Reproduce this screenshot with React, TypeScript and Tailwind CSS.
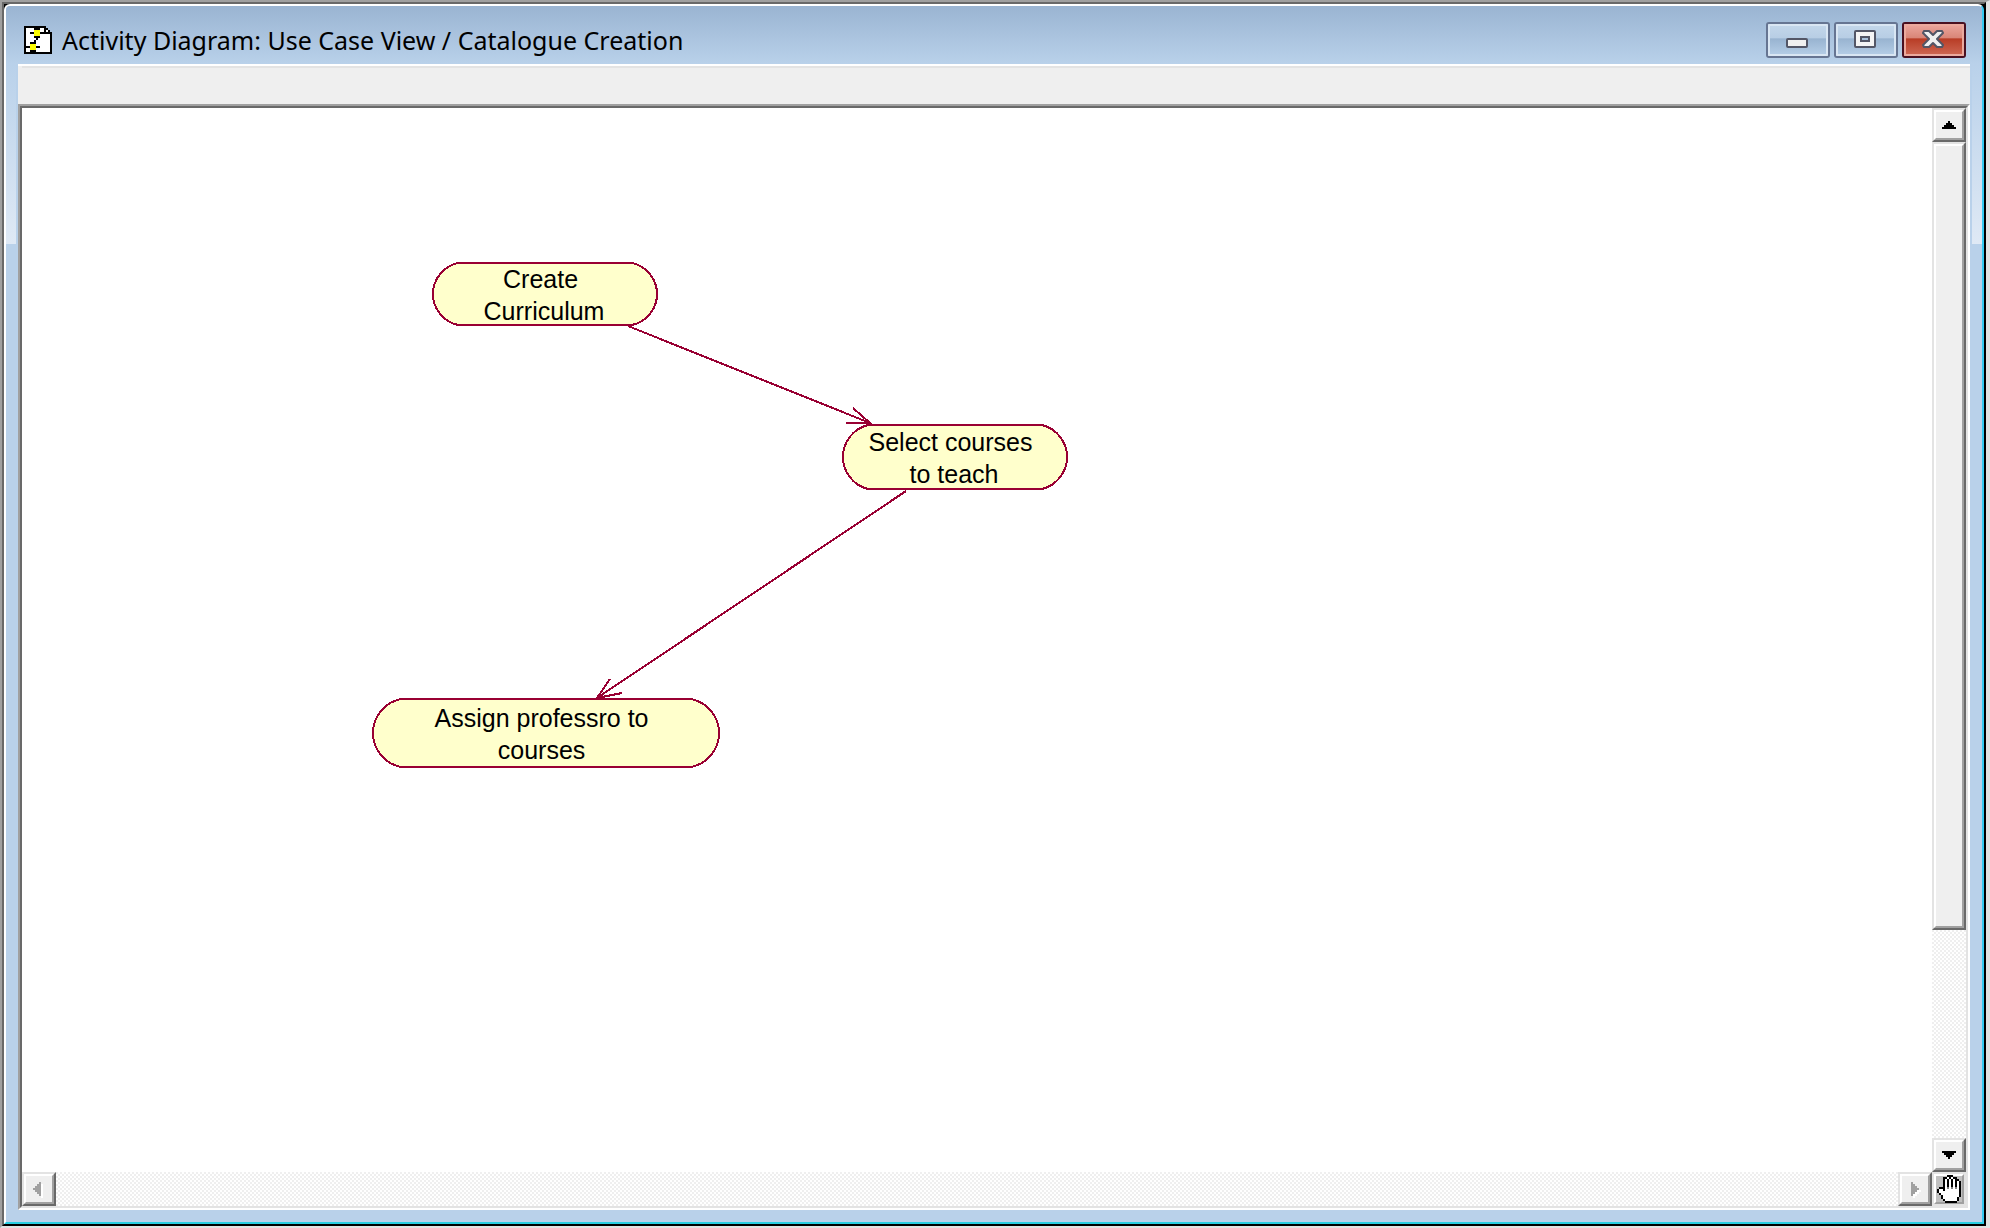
import type { ReactNode } from "react";
import clsx from "clsx";

interface ActivityNode {
  id: string;
  x: number;
  y: number;
  width: number;
  height: number;
  cap: number;
  lines: string[];
}

interface Transition {
  id: string;
  line: string;
  head: string;
}

// Canvas coordinates, origin at the top left of the drawing area
const activities: ActivityNode[] = [
  { id: "create", x: 410, y: 154, width: 226, height: 64, cap: 26, lines: ["Create ", "Curriculum"] },
  { id: "select", x: 820, y: 316, width: 226, height: 66, cap: 26, lines: ["Select courses ", "to teach"] },
  { id: "assign", x: 350, y: 590, width: 348, height: 70, cap: 29, lines: ["Assign professro to ", "courses "] },
];

const transitions: Transition[] = [
  { id: "create-select", line: "M606 218L848 315", head: "M824 315H848L831 300" },
  { id: "select-assign", line: "M884 383L575 590", head: "M588 571L575 590L600 585" },
];

const pageIcon = [
  "BBBBBBBBBBB...",
  "BWWWWBBBWWBB..",
  "BWWWWYYYWWBWB.",
  "BWWBBYYYBBBBBB",
  "BWWWWYYYWWWWWB",
  "BWWWWBBBWWWWWB",
  "BWWWWWBWWWWWWB",
  "BWWWWBWWWWWWWB",
  "BWWBBBWWWWWWWB",
  "BWWYYYWWWWWWWB",
  "BBBYYYBBWWWWWB",
  "BWWYYYWWWWWWWB",
  "BWWBBBWWWWWWWB",
  "BBBBBBBBBBBBBB",
];

const handIcon = [
  ".....BBB....",
  "...BBWBWBB..",
  "...BWBWBWBB.",
  "...BWBWBWBWB",
  "...BWBWBWBWB",
  "...BWBWBWBWB",
  ".BBBWGWGWGWB",
  "BWWBWWWWWWWB",
  "BWWWWWWWWWWB",
  ".BWWWWWWWWWB",
  "..BWWWWWWWWB",
  "..BWWWWWWWB.",
  "...BWWWWWWB.",
  "....BBBBBB..",
];

const palette: Record<string, string> = {
  B: "#000000",
  W: "#ffffff",
  Y: "#ffff00",
  G: "#808080",
};

function PixelIcon({ rows, className }: { rows: string[]; className?: string }) {
  return (
    <svg
      viewBox={`0 0 ${rows[0].length} ${rows.length}`}
      shapeRendering="crispEdges"
      className={className}
      aria-hidden="true"
    >
      {rows.flatMap((row, y) =>
        row.split("").map((c, x) =>
          palette[c] ? <rect key={`${x}-${y}`} x={x} y={y} width="1" height="1" fill={palette[c]} /> : null
        )
      )}
    </svg>
  );
}

// Raised 3D edge shared by the scroll buttons and the thumb
function Raised({ children }: { children?: ReactNode }) {
  return (
    <span className="block h-full w-full border-2 border-t-[#e3e3e3] border-r-[#696969] border-b-[#696969] border-l-[#e3e3e3]">
      <span className="flex h-full w-full items-center justify-center border-2 border-t-white border-r-[#a0a0a0] border-b-[#a0a0a0] border-l-white bg-[#efefef]">
        {children}
      </span>
    </span>
  );
}

const arrows = {
  up: "M6 0h2v2h2v2h2v2h2v2H0V6h2V4h2V2h2z",
  down: "M0 0h14v2h-2v2h-2v2H8v2H6V6H4V4H2V2H0z",
  left: "M6 0h2v14H6v-2H4v-2H2V8H0V6h2V4h2V2h2z",
  right: "M0 0h2v2h2v2h2v2h2v2H6v2H4v2H2v2H0z",
};

function ScrollButton({ dir, disabled = false }: { dir: keyof typeof arrows; disabled?: boolean }) {
  const vertical = dir === "up" || dir === "down";
  return (
    <button type="button" aria-label={`Scroll ${dir}`} disabled={disabled} className="h-[34px] w-[34px] shrink-0">
      <Raised>
        <svg
          width={vertical ? 14 : dir === "left" ? 12 : 8}
          height={vertical ? 8 : 14}
          overflow="visible"
          shapeRendering="crispEdges"
          aria-hidden="true"
        >
          {disabled && <path d={arrows[dir]} fill="#ffffff" transform="translate(2 2)" />}
          <path d={arrows[dir]} fill={disabled ? "#a0a0a0" : "#000000"} />
        </svg>
      </Raised>
    </button>
  );
}

function CaptionButton({ label, danger = false, children }: { label: string; danger?: boolean; children: ReactNode }) {
  return (
    <button
      type="button"
      aria-label={label}
      className={clsx(
        "h-9 w-16 rounded-[3px] border-2",
        danger ? "border-[#4a1020]" : "border-[#667592]"
      )}
    >
      <span
        className={clsx(
          "flex h-full w-full items-center justify-center rounded-[1px] border-2",
          danger
            ? "border-[#eba99d] bg-[linear-gradient(#e9a298_0%,#d88476_44%,#b83c25_45%,#cc6450_100%)]"
            : "border-[#d9e6f3] bg-[linear-gradient(#c2d6ea_0%,#b7cde4_44%,#98b3d0_45%,#b3cce5_100%)]"
        )}
      >
        {children}
      </span>
    </button>
  );
}

function TitleBar() {
  return (
    <header className="flex h-[58px] shrink-0 items-center justify-between bg-linear-to-b from-[#9ab4d2] to-[#b9d1ea] pt-[10px] pr-4 pl-[18px]">
      <div className="flex items-center gap-[10px]">
        <PixelIcon rows={pageIcon} className="h-7 w-7" />
        <h1 className="font-['Noto_Sans','Open_Sans',sans-serif] text-[25px] leading-8 whitespace-nowrap text-black">
          Activity Diagram: Use Case View / Catalogue Creation
        </h1>
      </div>
      <div className="flex gap-1">
        <CaptionButton label="Minimize">
          <svg width="24" height="24" aria-hidden="true">
            <rect x="1" y="11" width="20" height="8" rx="1" fill="#f0f0f0" stroke="#535666" strokeWidth="2" />
          </svg>
        </CaptionButton>
        <CaptionButton label="Maximize">
          <svg width="24" height="24" aria-hidden="true">
            <rect x="1" y="3" width="20" height="16" rx="1" fill="#f4f4f4" stroke="#535666" strokeWidth="2" />
            <rect x="7" y="9" width="8" height="4" fill="#a9c2dc" stroke="#535666" strokeWidth="2" />
          </svg>
        </CaptionButton>
        <CaptionButton label="Close" danger>
          <svg width="24" height="24" aria-hidden="true">
            <path
              d="M2 3H7L11 7L15 3H20L21 5L15 11L21 17L20 19H15L11 15L7 19H2L1 17L7 11L1 5Z"
              fill="#f0f0f0"
              stroke="#535666"
              strokeWidth="2"
              strokeLinejoin="round"
            />
          </svg>
        </CaptionButton>
      </div>
    </header>
  );
}

function Activity({ node }: { node: ActivityNode }) {
  const { x, y, width: w, height: h, cap } = node;
  // radius of the arc that spans the node height and bulges out by the cap width
  const ry = h / 2 - 1;
  const r = ((cap - 1) ** 2 + ry ** 2) / (2 * (cap - 1));
  return (
    <div
      className="absolute flex flex-col justify-center pt-[2px] pr-[2px] text-center font-['Liberation_Sans',Arial,sans-serif] text-[25px] leading-8 whitespace-pre text-black"
      style={{ left: x, top: y, width: w, height: h }}
    >
      <svg width={w} height={h} shapeRendering="crispEdges" className="absolute inset-0" aria-hidden="true">
        <path
          d={`M${cap} 1H${w - cap}A${r} ${r} 0 0 1 ${w - cap} ${h - 1}H${cap}A${r} ${r} 0 0 1 ${cap} 1Z`}
          fill="#ffffcc"
          stroke="#990033"
          strokeWidth="2"
        />
      </svg>
      {node.lines.map((line) => (
        <div key={line} className="relative">
          {line}
        </div>
      ))}
    </div>
  );
}

function Canvas() {
  return (
    <main className="relative min-w-0 flex-1 overflow-hidden bg-white">
      <svg className="absolute inset-0 h-full w-full" shapeRendering="crispEdges" aria-hidden="true">
        <g fill="none" stroke="#990033" strokeWidth="2">
          {transitions.map((t) => (
            <g key={t.id}>
              <path d={t.line} />
              <path d={t.head} />
            </g>
          ))}
        </g>
      </svg>
      {activities.map((node) => (
        <Activity key={node.id} node={node} />
      ))}
    </main>
  );
}

const track = "bg-[repeating-conic-gradient(#efefef_0_25%,#ffffff_0_50%)] bg-[length:4px_4px]";

export default function App() {
  return (
    <div className="flex h-screen flex-col overflow-hidden border-t-2 border-r-4 border-b-2 border-t-[#a0a0a0] border-r-[#e3e3e3] border-b-[#e3e3e3] border-l-2 border-l-[#a0a0a0]">
      <div className="flex min-h-0 flex-1 flex-col border-2 border-t-[#696969] border-r-black border-b-black border-l-[#696969] bg-black">
        <div className="flex min-h-0 flex-1 flex-col overflow-hidden rounded-t-[6px] border-2 border-t-white border-r-[#35cbf2] border-b-[#28cde0] border-l-white bg-[#b9d1ea]">
          <TitleBar />
          <div className="flex min-h-0 flex-1 pb-3">
            <div className="mr-[2px] h-[180px] w-[10px] shrink-0 bg-linear-to-b from-[#b9d1ea] to-[#dfe9f5]" />

            <div className="flex min-w-0 flex-1 flex-col">
              <div className="h-10 shrink-0 border-t-2 border-white bg-[#efefef]">
                <div className="ml-1 h-[2px] bg-[#e3e3e3]" />
              </div>

              <div className="flex min-h-0 flex-1 flex-col border-2 border-t-[#a0a0a0] border-r-white border-b-white border-l-[#a0a0a0]">
                <div className="flex min-h-0 flex-1 flex-col border-2 border-t-[#696969] border-r-[#e3e3e3] border-b-[#e3e3e3] border-l-[#696969]">
                  <div className="flex min-h-0 flex-1">
                    <Canvas />
                    <div className={clsx("flex w-[34px] shrink-0 flex-col", track)}>
                      <ScrollButton dir="up" />
                      <div className="flex-[788]">
                        <Raised />
                      </div>
                      <div className="flex-[208]" />
                      <ScrollButton dir="down" />
                    </div>
                  </div>
                  <div className={clsx("flex h-[34px] shrink-0", track)}>
                    <ScrollButton dir="left" disabled />
                    <div className="flex-1" />
                    <ScrollButton dir="right" disabled />
                    <button
                      type="button"
                      aria-label="Pan diagram"
                      className="h-[34px] w-[34px] border-2 border-[#e3e3e3] bg-[#c0c0c0]"
                    >
                      <span className="flex h-full w-full items-center justify-center border-2 border-t-white border-r-[#a0a0a0] border-b-[#a0a0a0] border-l-white">
                        <PixelIcon rows={handIcon} className="h-7 w-6 shrink-0" />
                      </span>
                    </button>
                  </div>
                </div>
              </div>
            </div>

            <div className="ml-[2px] h-[180px] w-[10px] shrink-0 bg-linear-to-b from-[#b9d1ea] to-[#dfe9f5]" />
          </div>
        </div>
      </div>
    </div>
  );
}
